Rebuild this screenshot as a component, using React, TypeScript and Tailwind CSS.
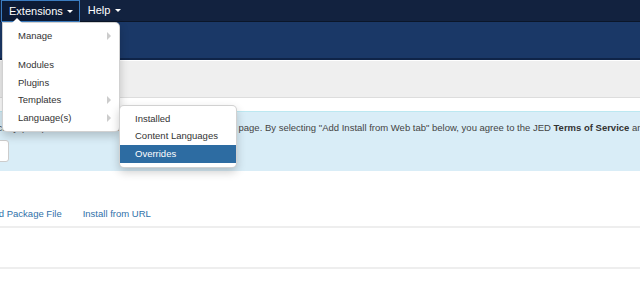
import React from 'react';

function Caret({ className }: { className: string }) {
    return <span className={`inline-block w-0 h-0 border-x-[3px] border-x-transparent border-t-[3px] ${className}`} />;
}

function SubArrow() {
    return <span className="absolute right-[8px] top-1/2 -translate-y-1/2 w-0 h-0 border-y-[4px] border-y-transparent border-l-[4px] border-l-[#cccccc]" />;
}

function MenuItem({ label, sub, active }: { label: string; sub?: boolean; active?: boolean }) {
    return (
        <div
            className={`relative h-[17.5px] flex items-center px-[15px] text-[9.5px] ${
                active ? 'bg-[#2d6ca2] text-white' : 'text-[#333333]'
            }`}
        >
            {label}
            {sub && <SubArrow />}
        </div>
    );
}

export default function App() {
    return (
        <div className="relative w-[640px] h-[294px] overflow-hidden bg-white font-['Liberation_Sans',Arial,sans-serif]">
            {/* top navbar */}
            <div className="h-[22px] bg-[#12223f] border-b border-[#0b1629] flex items-stretch text-[11px] text-white">
                <div className="ml-[1px] h-[22px] pl-[7px] pr-[6px] flex items-center gap-[4px] border border-[#3b7cc0] bg-[#0d1b35]">
                    Extensions
                    <Caret className="border-t-white" />
                </div>
                <div className="ml-[1px] px-[7px] flex items-center gap-[5px]">
                    Help
                    <Caret className="border-t-white" />
                </div>
            </div>

            {/* header */}
            <div className="h-[38px] bg-[#1a3867] border-b-2 border-[#0f2448]" />
            <div className="h-[38px] bg-[#efefef] border-t border-white border-b border-b-[#dddddd]" />
            <div className="h-[13px]" />

            {/* info alert */}
            <div className="h-[60px] bg-[#d9edf7] border-t border-[#bce8f1] pt-[9px] text-[9.5px] text-[#444444]">
                <p className="whitespace-nowrap ml-[-20px]">
                    Directory (JED) is now available with Install from Web on this page. By selecting "Add Install from Web tab" below, you agree to
                    the JED <b className="text-[#333333]">Terms of Service</b> and all applicable third party license terms.
                </p>
                <div className="mt-[5px] ml-[-20px] w-[29px] h-[22px] bg-white border border-[#cccccc] rounded-[3px]" />
            </div>

            {/* tabs */}
            <div className="mt-[36px] h-[21px] flex gap-[21px] ml-[-26px] text-[9.5px] text-[#3071a9] border-b-2 border-[#eeeeee]">
                <span>Upload Package File</span>
                <span>Install from URL</span>
            </div>
            <div className="h-[41px] border-b-2 border-[#eeeeee]" />

            {/* dropdown menu */}
            <div className="absolute left-[2px] top-[22px] w-[118px] py-[4px] bg-white border border-[#0000002e] rounded-b-[5px] rounded-tr-[5px] shadow-[0_4px_10px_rgba(0,0,0,0.2)]">
                <span className="absolute left-[9px] -top-[5px] w-0 h-0 border-x-[5px] border-x-transparent border-b-[5px] border-b-white" />
                <MenuItem label="Manage" sub />
                <div className="my-[5.5px] h-px bg-[#e5e5e5] border-b border-white" />
                <MenuItem label="Modules" />
                <MenuItem label="Plugins" />
                <MenuItem label="Templates" sub />
                <MenuItem label="Language(s)" sub />
            </div>

            {/* submenu */}
            <div className="absolute left-[119px] top-[105px] w-[118px] py-[4px] bg-white border border-[#0000002e] rounded-[5px] shadow-[0_4px_10px_rgba(0,0,0,0.2)]">
                <MenuItem label="Installed" />
                <MenuItem label="Content Languages" />
                <MenuItem label="Overrides" active />
            </div>
        </div>
    );
}
